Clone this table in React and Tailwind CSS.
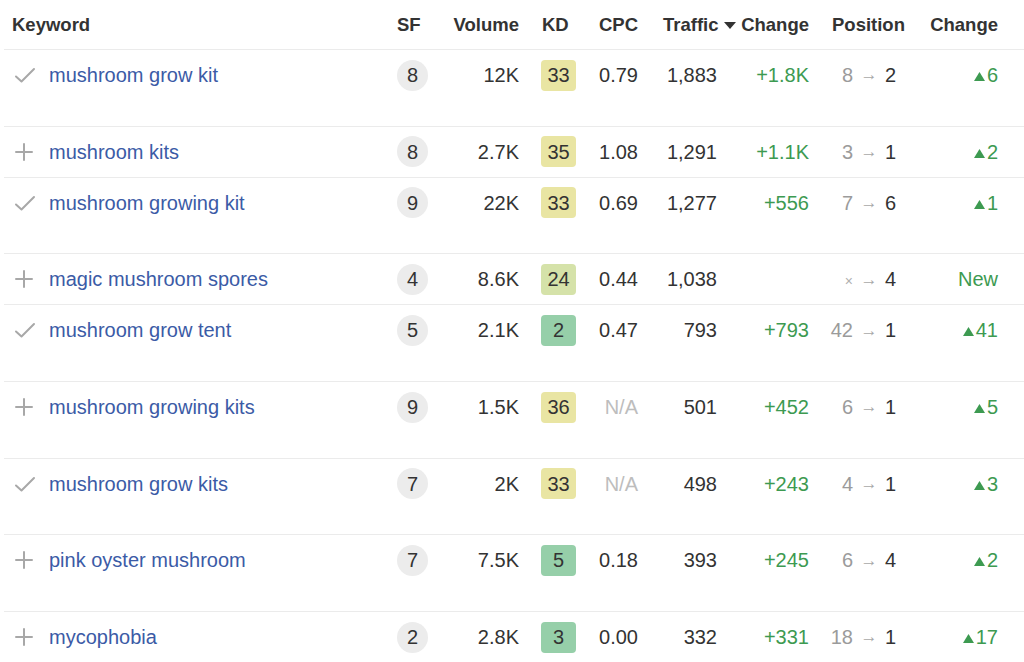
import React from 'react'

const kdColors = {
  yellow: 'bg-[#e9e5a3]',
  lime: 'bg-[#d5e2a9]',
  green: 'bg-[#96cfa9]',
}

const rows = [
  { done: true, kw: 'mushroom grow kit', sf: 8, vol: '12K', kd: 33, kdc: 'yellow', cpc: '0.79', traffic: '1,883', diff: '+1.8K', from: '8', to: '2', change: '6', tall: true },
  { done: false, kw: 'mushroom kits', sf: 8, vol: '2.7K', kd: 35, kdc: 'yellow', cpc: '1.08', traffic: '1,291', diff: '+1.1K', from: '3', to: '1', change: '2' },
  { done: true, kw: 'mushroom growing kit', sf: 9, vol: '22K', kd: 33, kdc: 'yellow', cpc: '0.69', traffic: '1,277', diff: '+556', from: '7', to: '6', change: '1', tall: true },
  { done: false, kw: 'magic mushroom spores', sf: 4, vol: '8.6K', kd: 24, kdc: 'lime', cpc: '0.44', traffic: '1,038', diff: '', from: null, to: '4', change: 'New' },
  { done: true, kw: 'mushroom grow tent', sf: 5, vol: '2.1K', kd: 2, kdc: 'green', cpc: '0.47', traffic: '793', diff: '+793', from: '42', to: '1', change: '41', tall: true },
  { done: false, kw: 'mushroom growing kits', sf: 9, vol: '1.5K', kd: 36, kdc: 'yellow', cpc: null, traffic: '501', diff: '+452', from: '6', to: '1', change: '5', tall: true },
  { done: true, kw: 'mushroom grow kits', sf: 7, vol: '2K', kd: 33, kdc: 'yellow', cpc: null, traffic: '498', diff: '+243', from: '4', to: '1', change: '3', tall: true },
  { done: false, kw: 'pink oyster mushroom', sf: 7, vol: '7.5K', kd: 5, kdc: 'green', cpc: '0.18', traffic: '393', diff: '+245', from: '6', to: '4', change: '2', tall: true },
  { done: false, kw: 'mycophobia', sf: 2, vol: '2.8K', kd: 3, kdc: 'green', cpc: '0.00', traffic: '332', diff: '+331', from: '18', to: '1', change: '17', tall: true },
]

const gridCols = 'grid grid-cols-[386px_45px_84px_68px_51px_79px_92px_106px_83px_1fr]'

const CheckIcon = () => (
  <svg width="22" height="18" viewBox="0 0 22 18" fill="none">
    <path d="M2 10.5 L7.5 15.5 L20 3" stroke="#a8a8a8" strokeWidth="2" strokeLinecap="round" strokeLinejoin="round" />
  </svg>
)

const PlusIcon = () => (
  <svg width="20" height="20" viewBox="0 0 20 20" fill="none">
    <path d="M10 2 V18 M2 10 H18" stroke="#a8a8a8" strokeWidth="2" strokeLinecap="round" />
  </svg>
)

const UpTriangle = () => (
  <svg width="11" height="9" viewBox="0 0 11 9" className="mr-[2px] mt-[3px] shrink-0">
    <path d="M5.5 0 L11 9 H0 Z" fill="#3d9a51" />
  </svg>
)

const Row = ({ r }) => (
  <div className={`${gridCols} border-b border-[#ebebeb] ${r.tall ? 'pb-[25.7px]' : ''}`}>
    <div className="h-[50px] flex items-center pl-[10px]">
      <span className="w-[35px] flex items-center">{r.done ? <CheckIcon /> : <PlusIcon />}</span>
      <span className="text-[#3b5ba6]">{r.kw}</span>
    </div>
    <div className="h-[50px] flex items-center justify-center">
      <span className="w-[31px] h-[31px] rounded-full bg-[#ececec] flex items-center justify-center text-[#333]">{r.sf}</span>
    </div>
    <div className="h-[50px] flex items-center justify-end text-[#333]">{r.vol}</div>
    <div className="h-[50px] flex items-center pl-[22px]">
      <span className={`w-[35px] h-[31px] rounded-[4px] flex items-center justify-center text-[#333] ${kdColors[r.kdc]}`}>{r.kd}</span>
    </div>
    <div className="h-[50px] flex items-center justify-end">
      {r.cpc ? <span className="text-[#333]">{r.cpc}</span> : <span className="text-[#bdbdbd]">N/A</span>}
    </div>
    <div className="h-[50px] flex items-center justify-end text-[#333]">{r.traffic}</div>
    <div className="h-[50px] flex items-center justify-end text-[#3d9a51]">{r.diff}</div>
    <div className="h-[50px] flex items-center">
      <span className="w-[44px] text-right text-[#9b9b9b]">
        {r.from ? r.from : <span className="text-[14px] text-[#b0b0b0]">×</span>}
      </span>
      <span className="w-[32px] text-center text-[17px] text-[#a8a8a8]">→</span>
      <span className="text-[#333]">{r.to}</span>
    </div>
    <div className="h-[50px] flex items-center justify-end text-[#3d9a51]">
      {r.change === 'New' ? 'New' : (<><UpTriangle />{r.change}</>)}
    </div>
    <div />
  </div>
)

export default function App() {
  return (
    <div className="w-[1024px] h-[662px] overflow-hidden bg-white text-[20px] font-['Liberation_Sans',Arial,sans-serif]">
      <div className="ml-[4px]">
        <div className={`${gridCols} h-[50px] border-b border-[#ebebeb] text-[18.5px] font-bold text-[#333]`}>
          <div className="flex items-center pl-[8px]">Keyword</div>
          <div className="flex items-center pl-[7px]">SF</div>
          <div className="flex items-center justify-end">Volume</div>
          <div className="flex items-center pl-[23px]">KD</div>
          <div className="flex items-center justify-end">CPC</div>
          <div className="flex items-center pl-[25px] whitespace-nowrap overflow-visible">
            <span>Traffic</span>
            <svg width="12" height="8" viewBox="0 0 12 8" className="ml-[5px] mt-[2px] shrink-0">
              <path d="M0 0 H12 L6 7 Z" fill="#333" />
            </svg>
          </div>
          <div className="flex items-center justify-end">Change</div>
          <div className="flex items-center pl-[23px]">Position</div>
          <div className="flex items-center justify-end">Change</div>
          <div />
        </div>
        {rows.map((r) => (
          <Row r={r} key={r.kw} />
        ))}
      </div>
    </div>
  )
}
